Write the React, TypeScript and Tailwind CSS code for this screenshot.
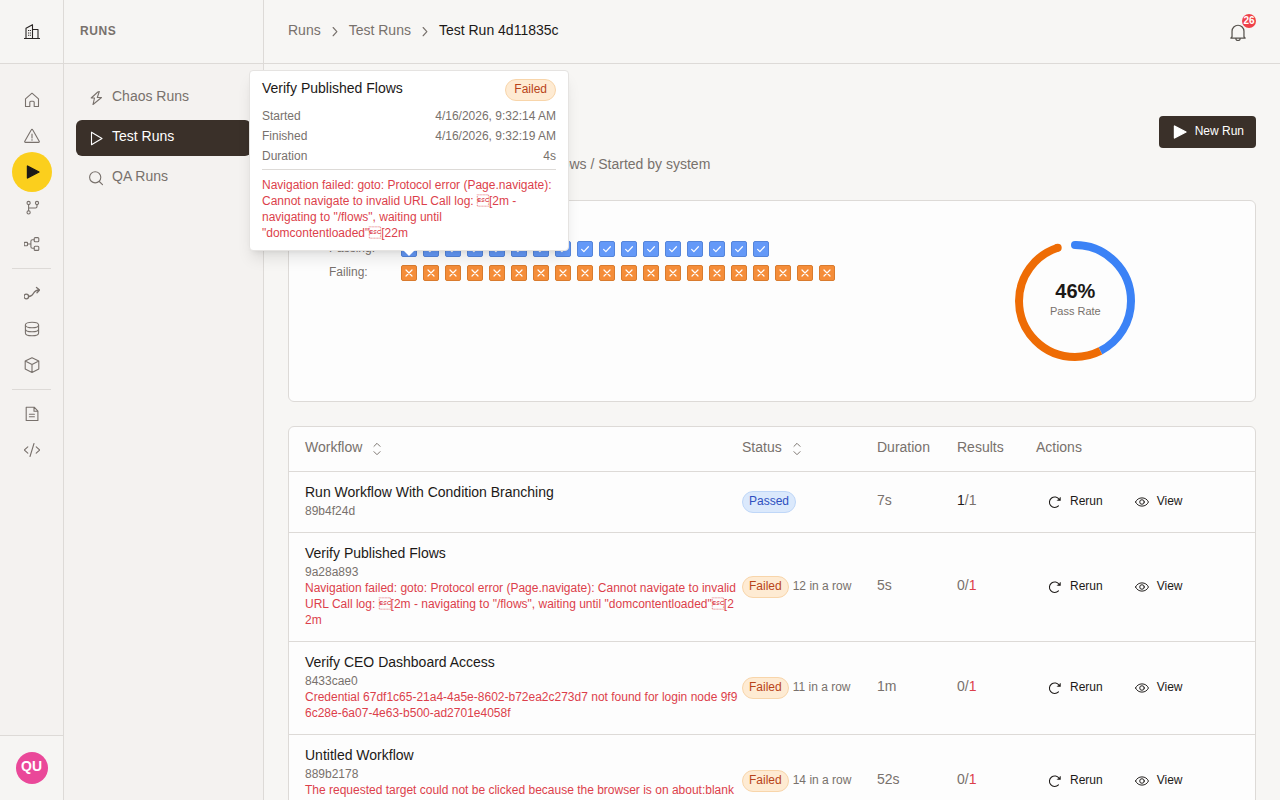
import { ReactNode } from "react";

const ERROR_NAVIGATION =
    'Navigation failed: goto: Protocol error (Page.navigate): Cannot navigate to invalid URL Call log: \u001b[2m - navigating to "/flows", waiting until "domcontentloaded"\u001b[22m';

interface IWorkflowRun {
    id: string;
    name: string;
    passed: boolean;
    streak?: number;
    duration: string;
    error?: string;
}

const workflowRuns: IWorkflowRun[] = [
    { id: "89b4f24d", name: "Run Workflow With Condition Branching", passed: true, duration: "7s" },
    { id: "9a28a893", name: "Verify Published Flows", passed: false, streak: 12, duration: "5s", error: ERROR_NAVIGATION },
    {
        id: "8433cae0",
        name: "Verify CEO Dashboard Access",
        passed: false,
        streak: 11,
        duration: "1m",
        error: "Credential 67df1c65-21a4-4a5e-8602-b72ea2c273d7 not found for login node 9f96c28e-6a07-4e63-b500-ad2701e4058f",
    },
    {
        id: "889b2178",
        name: "Untitled Workflow",
        passed: false,
        streak: 14,
        duration: "52s",
        error: "The requested target could not be clicked because the browser is on about:blank Make sure a navigation step runs first",
    },
];

const PASSING = 17;
const FAILING = 20;

function Icon({ children, className = "size-4" }: { children: ReactNode; className?: string }) {
    return (
        <svg className={`shrink-0 ${className}`} viewBox="0 0 16 16" fill="none" stroke="currentColor" strokeWidth="1.1" strokeLinecap="round" strokeLinejoin="round" aria-hidden="true">
            {children}
        </svg>
    );
}

const BuildingIcon = () => (
    <Icon>
        <path d="M0 14.5h16M2 14.5V4.2L8.5.7v13.8M8.5 5.5H14v9" strokeLinecap="butt" />
        <path d="M4.6 6v1M6.4 6v1M4.6 8.4v1M6.4 8.4v1M4.6 10.8v1M6.4 10.8v1" strokeLinecap="butt" />
    </Icon>
);
const HomeIcon = () => <Icon><path d="M1.5 6.8 8 1.2l6.5 5.6v7.7h-4.3v-4.2a1 1 0 0 0-1-1H6.8a1 1 0 0 0-1 1v4.2H1.5z" /></Icon>;
const WarningIcon = () => <Icon><path d="M7.2 1.9.8 13.2c-.3.6 0 1.2.7 1.2h13c.7 0 1-.6.7-1.2L8.8 1.9a.9.9 0 0 0-1.6 0zM8 6v4M8 11.6v.6" /></Icon>;
const PlayIcon = () => <Icon><path d="M3.5 2.2v12.6L14 8.5z" /></Icon>;
const PlaySolidIcon = () => <Icon><path d="M3.5 2v12L15 8z" fill="currentColor" strokeWidth="1.4" /></Icon>;
const BranchIcon = () => (
    <Icon>
        <circle cx="4.6" cy="3" r="1.6" />
        <circle cx="13" cy="3" r="1.6" />
        <circle cx="4.6" cy="12.4" r="1.6" />
        <path d="M4.6 4.6v6.2M4.6 8h6.9c.8 0 1.5-.6 1.5-1.5V4.6" />
    </Icon>
);
const WorkflowIcon = () => (
    <Icon>
        <rect x=".2" y="6.4" width="3.3" height="3.3" rx=".5" />
        <rect x="10.2" y="1.6" width="4.6" height="4.2" rx="1" />
        <rect x="10.2" y="10.2" width="4.6" height="4.2" rx="1" />
        <path d="M3.5 8h3.4M10.2 3.7H8.4c-.8 0-1.5.7-1.5 1.5v5.6c0 .8.7 1.5 1.5 1.5h1.8" />
    </Icon>
);
const FlowIcon = () => (
    <Icon>
        <circle cx="2.3" cy="11.5" r="2.3" strokeWidth="1.3" />
        <path d="M4.6 11.5c6.400 0 3-6.500 10.700-6.500M12.500 2.500 15.600 5l-2.600 2.800" strokeWidth="1.300" />
    </Icon>
);
const DatabaseIcon = () => (
    <Icon>
        <ellipse cx="8" cy="4" rx="6.6" ry="2.8" />
        <path d="M1.4 4v8c0 1.6 3 2.8 6.6 2.8s6.6-1.2 6.6-2.8V4M1.4 8c0 1.6 3 2.8 6.6 2.8s6.6-1.2 6.6-2.8" />
    </Icon>
);
const CubeIcon = () => <Icon><path d="M8 .7l6.8 3.4v7.8L8 15.4l-6.8-3.5V4.1zM1.2 4.1 8 7.6l6.8-3.5M8 7.6v7.8" /></Icon>;
const DocumentIcon = () => <Icon><path d="M2.2 1.2h8l3.7 3.9v9.4H2.2zM10 1.4v3.8h3.8M5.4 8.3h5M5.4 10.7h5" /></Icon>;
const CodeIcon = () => <Icon><path d="M3.8 4.8.2 8l3.6 3.2M12.2 4.8 15.8 8l-3.6 3.2M10 1.5l-4 13" /></Icon>;
const BoltIcon = () => <Icon><path d="M9.800 2 3.200 8h3.300l-1.500 6.500L13.500 7.500H9.300L11.300 1.500z" /></Icon>;
const SearchIcon = () => <Icon><circle cx="7.2" cy="7.3" r="5.6" /><path d="m11.3 11.500 3.200 3.200" /></Icon>;
const ChevronIcon = () => <Icon className="size-3"><path d="m5.500 2 5 5.500-5 5.500" strokeWidth="1.500" /></Icon>;
const SortIcon = () => <Icon className="size-3.5"><path d="M4.500 5 8 1.500 11.500 5M4.500 11 8 14.500l3.500-3.500" /></Icon>;
const RerunIcon = () => (
    <Icon className="size-3.5">
        <path d="M12.800 5.200A6 6 0 1 0 12 12.400" strokeWidth="1.200" />
        <path d="M14.200 3v3.300h-3.300z" fill="currentColor" strokeWidth=".6" />
    </Icon>
);
const EyeIcon = () => (
    <Icon className="size-3.5">
        <path d="M.6 8C2 5 4.700 3.300 8 3.300S14 5 15.400 8C14 11 11.300 12.700 8 12.700S2 11 .6 8z" />
        <circle cx="8" cy="8" r="2.600" />
    </Icon>
);
const BellIcon = () => (
    <Icon className="size-4.5">
        <path d="M2.700 12.200V7.300a5.300 5.300 0 0 1 10.600 0v4.900l1.100 1.200H1.600zM6 13.600a2 2 0 0 0 4 0" />
    </Icon>
);

const railGroups = [
    [
        { label: "Home", icon: <HomeIcon /> },
        { label: "Incidents", icon: <WarningIcon /> },
        { label: "Runs", icon: <PlaySolidIcon />, active: true },
        { label: "Branches", icon: <BranchIcon /> },
        { label: "Workflows", icon: <WorkflowIcon /> },
    ],
    [
        { label: "Flows", icon: <FlowIcon /> },
        { label: "Data", icon: <DatabaseIcon /> },
        { label: "Packages", icon: <CubeIcon /> },
    ],
    [
        { label: "Documents", icon: <DocumentIcon /> },
        { label: "Code", icon: <CodeIcon /> },
    ],
];

function StatusBadge({ passed, className = "px-1.5" }: { passed: boolean; className?: string }) {
    return (
        <span
            className={`inline-block rounded-full border pt-px pb-[3px] text-xs ${className} ${
                passed ? "border-[#bfd7f8] bg-[#dbe9fc] text-[#2f50c0]" : "border-[#f8d5aa] bg-[#feebd3] text-[#b8441a]"
            }`}
        >
            {passed ? "Passed" : "Failed"}
        </span>
    );
}

function RunTooltip() {
    return (
        <div role="tooltip" className="absolute bottom-1.5 left-1/2 z-20 w-80 -translate-x-1/2 rounded border border-[#e5e3e1] bg-white px-3 py-2 text-xs text-[#78716c] shadow-lg">
            <div className="flex items-start justify-between">
                <span className="text-sm/[19px] text-[#1c1917]">Verify Published Flows</span>
                <StatusBadge passed={false} className="px-2" />
            </div>
            <dl className="mt-[7px] space-y-1">
                <div className="flex justify-between"><dt>Started</dt><dd>4/16/2026, 9:32:14 AM</dd></div>
                <div className="flex justify-between"><dt>Finished</dt><dd>4/16/2026, 9:32:19 AM</dd></div>
                <div className="flex justify-between"><dt>Duration</dt><dd>4s</dd></div>
            </dl>
            <p className="mt-[5px] border-t border-[#dddad7] pt-[7px] pb-px text-[#dc3f4b]">{ERROR_NAVIGATION}</p>
            <div className="absolute top-full left-1/2 -translate-x-1/2 border-x-6 border-t-6 border-x-transparent border-t-white" />
        </div>
    );
}

function ResultSquare({ passed }: { passed: boolean }) {
    return (
        <button
            type="button"
            aria-label={passed ? "Passing run" : "Failing run"}
            className={`flex size-4 items-center justify-center rounded-xs border text-white ${
                passed ? "border-[#5585da] bg-[#6499f8]" : "border-[#d97b2e] bg-[#f58d39]"
            }`}
        >
            <Icon className="size-3">
                {passed ? <path d="m3.500 8.500 3 3 6-6.500" strokeWidth="1.600" /> : <path d="m4 4 8 8M12 4l-8 8" strokeWidth="1.600" />}
            </Icon>
        </button>
    );
}

function PassRate() {
    return (
        <div className="relative mx-auto flex size-[120px] flex-col items-center justify-center">
            <svg className="absolute inset-0 -rotate-90" viewBox="0 0 120 120" fill="none" strokeWidth="8" aria-hidden="true">
                <circle cx="60" cy="60" r="56" stroke="#3b82f6" pathLength="360" strokeDasharray="153 360" />
                <circle cx="60" cy="60" r="56" stroke="#ee6c05" pathLength="360" strokeDasharray="189 360" strokeDashoffset="-153" />
                <circle cx="116" cy="60" r="4" fill="#3b82f6" />
                <circle cx="113.3" cy="42.7" r="4" fill="#ee6c05" />
            </svg>
            <span className="text-xl/5 font-bold text-[#1c1917]">46%</span>
            <span className="my-0.5 text-[11px]/4 text-[#78716c]">Pass Rate</span>
        </div>
    );
}

export default function TestRunPage() {
    return (
        <div className="flex h-screen overflow-hidden bg-[#f7f6f4] font-['Liberation_Sans',Arial,sans-serif] text-sm text-[#78716c]">
            <nav aria-label="Main" className="flex w-16 shrink-0 flex-col border-r border-[#dddad7] bg-[#f4f2f0]">
                <a href="#" aria-label="Organization" className="flex h-16 items-center justify-center border-b border-[#dddad7] bg-[#f6f5f3] text-[#292524]">
                    <BuildingIcon />
                </a>
                <div className="flex-1 px-3 pt-[18px]">
                    {railGroups.map((group, index) => (
                        <ul key={index} className={index > 0 ? "mt-1.5 border-t border-[#dddad7] pt-1.5" : ""}>
                            {group.map((item) => (
                                <li key={item.label} className="flex h-9 items-center justify-center">
                                    <a
                                        href="#"
                                        aria-label={item.label}
                                        className={`flex size-10 shrink-0 items-center justify-center rounded-full ${"active" in item ? "bg-[#fbcf1d] text-[#1c1917]" : ""}`}
                                    >
                                        {item.icon}
                                    </a>
                                </li>
                            ))}
                        </ul>
                    ))}
                </div>
                <div className="flex justify-center border-t border-[#dddad7] bg-[#f6f5f3] py-4">
                    <button type="button" className="size-8 rounded-full bg-[#ea4899] pb-1 font-bold text-white">QU</button>
                </div>
            </nav>

            <aside className="w-[200px] shrink-0 border-r border-[#dddad7] bg-[#f4f2f0]">
                <div className="flex h-16 items-center border-b border-[#dddad7] bg-[#f6f5f3] px-4 pb-px">
                    <h2 className="text-xs font-bold tracking-wider">RUNS</h2>
                </div>
                <ul className="space-y-1 px-3 py-4">
                    <li>
                        <a href="#" className="flex h-9 items-center gap-2 rounded-md px-3"><BoltIcon /><span className="pb-1">Chaos Runs</span></a>
                    </li>
                    <li>
                        <a href="#" className="flex h-9 items-center gap-2 rounded-md bg-[#3a3029] px-3 text-white"><PlayIcon /><span className="pb-1">Test Runs</span></a>
                    </li>
                    <li>
                        <a href="#" className="flex h-9 items-center gap-2 rounded-md px-3"><SearchIcon /><span className="pb-1">QA Runs</span></a>
                    </li>
                </ul>
            </aside>

            <div className="min-w-0 flex-1">
                <header className="flex h-16 items-center justify-between border-b border-[#dddad7] px-6">
                    <nav aria-label="Breadcrumb" className="flex items-center gap-2">
                        <a href="#" className="pb-[3px]">Runs</a>
                        <ChevronIcon />
                        <a href="#" className="pb-[3px]">Test Runs</a>
                        <ChevronIcon />
                        <span className="pb-[3px] text-[#1c1917]">Test Run 4d11835c</span>
                    </nav>
                    <button type="button" aria-label="Notifications" className="relative flex size-9 items-center justify-center text-[#57534e]">
                        <BellIcon />
                        <span className="absolute top-0 right-0 size-3.5 rounded-full bg-[#ef4149] text-center text-[10px]/[13px] font-bold text-white">26</span>
                    </button>
                </header>

                <main className="px-6 pt-6">
                    <div className="flex items-start justify-between">
                        <div className="pt-1 pb-2.5">
                            <h1 className="text-2xl/10 font-bold text-[#1c1917]">Test Run 4d11835c</h1>
                            <p className="mt-5.5">Executed 4/16/2026, 9:32:19 AM / 37 Workflows / Started by system</p>
                        </div>
                        <button type="button" className="mt-7 flex h-8 items-center gap-2 rounded bg-[#3a3029] px-3 text-xs text-white">
                            <PlaySolidIcon />
                            <span className="pb-0.5">New Run</span>
                        </button>
                    </div>

                    <section className="mt-4 grid grid-cols-3 gap-6 rounded-md border border-[#dddad7] bg-[#fdfdfd] p-10">
                        <div className="col-span-2 space-y-2 text-xs">
                            <div className="flex h-4 items-center">
                                <span className="w-[72px] pb-0.5">Passing:</span>
                                <div className="flex gap-1.5">
                                    {Array.from({ length: PASSING }, (_, i) => (
                                        <div key={i} className="relative">
                                            <ResultSquare passed />
                                            {i === 0 && <RunTooltip />}
                                        </div>
                                    ))}
                                </div>
                            </div>
                            <div className="flex h-4 items-center">
                                <span className="w-[72px] pb-0.5">Failing:</span>
                                <div className="flex gap-1.5">
                                    {Array.from({ length: FAILING }, (_, i) => <ResultSquare key={i} passed={false} />)}
                                </div>
                            </div>
                        </div>
                        <PassRate />
                    </section>

                    <section className="mt-6 rounded-md border border-[#dddad7] bg-[#fdfdfd]">
                        <table className="w-full table-fixed text-left">
                            <thead>
                                <tr className="h-11">
                                    <th className="pb-1 pl-4 font-normal">
                                        <button type="button" className="flex items-center gap-2">Workflow<span className="pt-1"><SortIcon /></span></button>
                                    </th>
                                    <th className="w-[135px] pb-1 font-normal">
                                        <button type="button" className="flex items-center gap-2">Status<span className="pt-1"><SortIcon /></span></button>
                                    </th>
                                    <th className="w-20 pb-1 font-normal">Duration</th>
                                    <th className="w-[79px] pb-1 font-normal">Results</th>
                                    <th className="w-[219px] pb-1 font-normal">Actions</th>
                                </tr>
                            </thead>
                            <tbody>
                                {workflowRuns.map((run) => (
                                    <tr key={run.id} className="border-t border-[#dddad7]">
                                        <td className="pt-2.5 pr-[3px] pb-[13px] pl-4">
                                            <div className="mb-px text-[#1c1917]">{run.name}</div>
                                            <div className="text-xs">{run.id}</div>
                                            {run.error && <div className="text-xs break-all text-[#dc3f4b]">{run.error}</div>}
                                        </td>
                                        <td>
                                            <div className="flex items-center gap-1 text-xs">
                                                <StatusBadge passed={run.passed} />
                                                {run.streak && <span className="pb-0.5">{run.streak} in a row</span>}
                                            </div>
                                        </td>
                                        <td className="pb-[3px]">{run.duration}</td>
                                        <td className="pb-[3px]">
                                            <span className={run.passed ? "text-[#1c1917]" : ""}>{run.passed ? 1 : 0}</span>/
                                            <span className={run.passed ? "" : "text-[#dc3f4b]"}>1</span>
                                        </td>
                                        <td>
                                            <div className="flex gap-2 text-xs text-[#1c1917]">
                                                <button type="button" className="flex items-center gap-2 px-3"><RerunIcon /><span className="pb-0.5">Rerun</span></button>
                                                <button type="button" className="flex items-center gap-2 px-3"><EyeIcon /><span className="pb-0.5">View</span></button>
                                            </div>
                                        </td>
                                    </tr>
                                ))}
                            </tbody>
                        </table>
                    </section>
                </main>
            </div>
        </div>
    );
}
